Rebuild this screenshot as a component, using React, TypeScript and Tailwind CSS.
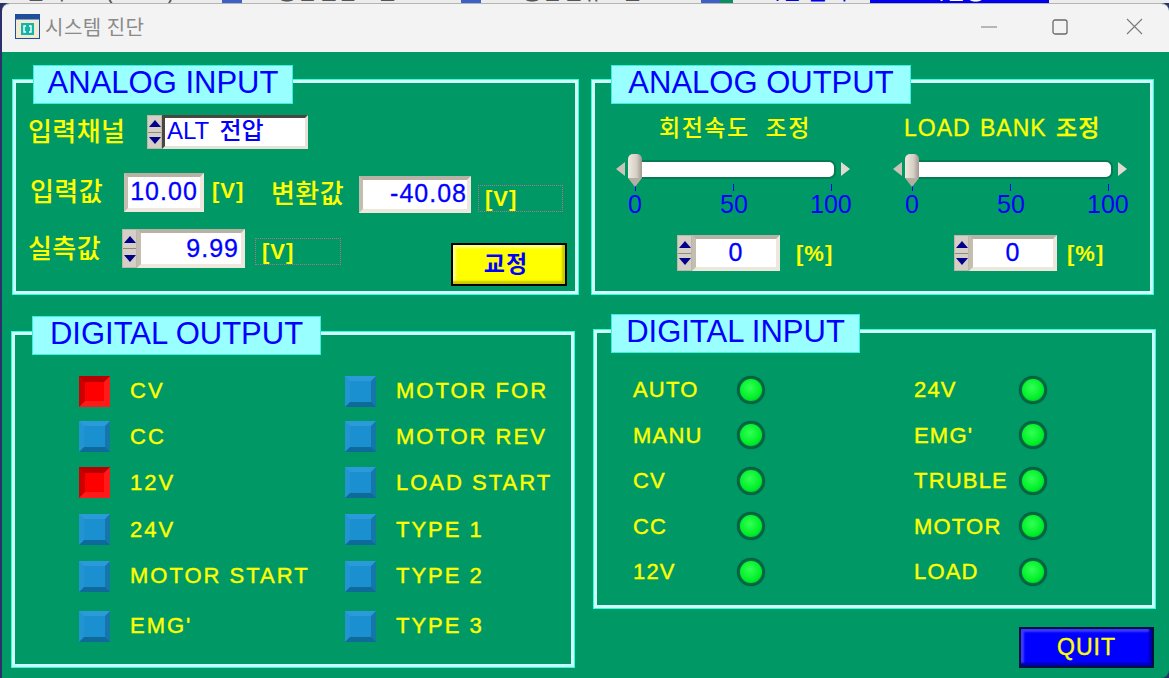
import React from 'react';

const ledClass =
  'w-[28px] h-[28px] rounded-full bg-[#0a7a50] shadow-[inset_0_0_3px_2px_#045c3a,0_0_2px_#067a52] flex items-center justify-center';

const korLabel = 'text-[#ffff00] text-[26px] leading-none font-medium tracking-[0.4px]';
const engBase = 'text-[#ffff00] text-[22px] [-webkit-text-stroke:0.4px_#ffff00]';

// little LabVIEW style up/down stepper
const Spinner = () => (
  <div className="w-[15px] h-full bg-[#d6cfc6] flex flex-col shrink-0 border border-[#bdb6ab]">
    <div className="flex-1 flex items-center justify-center border-b border-[#8f897f]">
      <div className="w-0 h-0 border-x-[6px] border-x-transparent border-b-[7px] border-b-[#00008c]" />
    </div>
    <div className="flex-1 flex items-center justify-center">
      <div className="w-0 h-0 border-x-[6px] border-x-transparent border-t-[7px] border-t-[#00008c]" />
    </div>
  </div>
);

interface ValueBoxProps {
  value: string;
  className: string;
  align?: string;
}

const ValueBox: React.FC<ValueBoxProps> = ({ value, className, align = 'justify-end' }) => (
  <div
    className={`flex items-center bg-white border-[4px] border-t-[#b8b1a6] border-l-[#c4bdb2] border-r-[#eee7de] border-b-[#eee7de] text-[#0000ff] text-[25px] tracking-[1px] [-webkit-text-stroke:0.3px_#0000ff] ${align} ${className}`}
  >
    {value}
  </div>
);

const Panel: React.FC<{ title: string; titleClass: string; className: string; children: React.ReactNode }> = ({
  title,
  titleClass,
  className,
  children,
}) => (
  <div className={`relative border-[3px] border-[#ccfffa] shadow-[0_0_0_1px_#33ffe0] ${className}`}>
    <div
      className={`absolute top-[-18px] h-[39px] pb-[4px] bg-[#99ffff] border border-[#3cf0e0] flex items-center justify-center text-[#0000ff] text-[31px] leading-none ${titleClass}`}
    >
      {title}
    </div>
    {children}
  </div>
);

const Unit: React.FC<{ text: string; className?: string }> = ({ text, className = '' }) => (
  <span className={`text-[#ffff00] text-[22px] font-bold tracking-[1px] ${className}`}>{text}</span>
);

const DottedUnit: React.FC<{ className: string }> = ({ className }) => (
  <div className={`flex items-center pl-[6px] border border-dotted border-[#b8708c] ${className}`}>
    <Unit text="[V]" />
  </div>
);

const Slider = () => (
  <div className="w-[236px] flex flex-col mt-[10px]">
    <div className="flex items-center h-[30px] w-[234px]">
      <div className="w-0 h-0 border-y-[7px] border-y-transparent border-r-[9px] border-r-[#c9c3b8]" />
      <div className="relative ml-[3px] flex-1 h-[19px] bg-white rounded-r-[7px] border-[2px] border-[#067a52]">
        <div className="absolute left-[-2px] top-[-8px] w-[14px] h-[24px] bg-[linear-gradient(90deg,#efe9e0,#d6cfc6_60%,#9f988d)] rounded-t-[5px]" />
        <div className="absolute left-[-2px] top-[16px] w-0 h-0 border-x-[7px] border-x-transparent border-t-[9px] border-t-[#b5aea3]" />
      </div>
      <div className="ml-[5px] w-0 h-0 border-y-[7px] border-y-transparent border-l-[9px] border-l-[#e0dad0]" />
    </div>
    <div className="flex pl-[19px] w-[216px] justify-between">
      <div className="w-px h-[7px] bg-[#0000ff]" />
      <div className="w-px h-[7px] bg-[#0000ff]" />
      <div className="w-px h-[7px] bg-[#0000ff]" />
    </div>
    <div className="flex w-[240px] text-[#0000ff] text-[25px] leading-[28px] pl-[12px] -mt-px">
      <span className="w-[92px]">0</span>
      <span className="w-[90px]">50</span>
      <span>100</span>
    </div>
  </div>
);

const PercentInput = () => (
  <div className="flex items-center h-[36px]">
    <Spinner />
    <ValueBox value="0" className="w-[88px] h-full" align="justify-center" />
  </div>
);

const PushButton: React.FC<{ on?: boolean }> = ({ on }) => (
  <div
    className={
      on
        ? 'w-[31px] h-[31px] bg-[#ff0000] border-[6px] border-t-[#b80000] border-l-[#cc0000] border-r-[#ff1a1a] border-b-[#ff1a1a] shrink-0'
        : 'w-[31px] h-[31px] bg-[#1a90d0] border-[5px] border-t-[#2a9ad8] border-l-[#2394d2] border-r-[#1576aa] border-b-[#0f6a9c] shrink-0'
    }
  />
);

const digitalOutputs = [
  { left: 'CV', leftOn: true, right: 'MOTOR FOR', rowClass: 'h-[46px]' },
  { left: 'CC', right: 'MOTOR REV', rowClass: 'h-[45px]' },
  { left: '12V', leftOn: true, right: 'LOAD START', rowClass: 'h-[47px]' },
  { left: '24V', right: 'TYPE 1', rowClass: 'h-[47px]' },
  { left: 'MOTOR START', right: 'TYPE 2', rowClass: 'h-[46px]' },
  { left: "EMG'", right: 'TYPE 3', rowClass: 'h-[50px] pt-[4px]' },
];

const digitalInputs = [
  ['AUTO', '24V'],
  ['MANU', "EMG'"],
  ['CV', 'TRUBLE'],
  ['CC', 'MOTOR'],
  ['12V', 'LOAD'],
];

const Led = () => (
  <div className={ledClass}>
    <div className="w-[22px] h-[22px] rounded-full bg-[radial-gradient(circle_at_45%_40%,#33ff55,#00f028_60%,#00b030)]" />
  </div>
);

// text of the window behind, only the bottom of the letters shows
const BehindText: React.FC<{ text: string; className: string }> = ({ text, className }) => (
  <div className={`h-[3px] overflow-hidden shrink-0 ${className}`}>
    <div className="-mt-[19px] text-[22px] leading-[22px] whitespace-nowrap">{text}</div>
  </div>
);

export default function App() {
  return (
    <div className="w-[1169px] h-[678px] overflow-hidden bg-[#e8e8e8] flex flex-col font-['Liberation_Sans','Noto_Sans_CJK_KR',sans-serif]">
      {/* bit of the app sitting behind the dialog */}
      <div className="h-[3px] shrink-0 flex items-start overflow-hidden bg-[#ececec] text-[#555555]">
        <BehindText text="입력프로(BEMI)" className="ml-[25px] w-[197px]" />
        <div className="w-[20px] h-full bg-[#3a62c8]" />
        <BehindText text="통합전압 1번" className="ml-[35px] w-[184px]" />
        <div className="w-[20px] h-full bg-[#3a62c8]" />
        <BehindText text="통합전류 1번" className="ml-[41px] w-[179px]" />
        <div className="w-[19px] h-full bg-[#3a62c8]" />
        <div className="w-[13px] h-full bg-[#0a9060]" />
        <BehindText text="시험 출력" className="ml-[28px] w-[109px] text-[#0000ee]" />
        <div className="w-[179px] h-full bg-[#0000ee] text-white">
          <BehindText text="시험중" className="ml-[55px] w-[100px]" />
        </div>
      </div>

      <div className="flex-1 flex min-h-0 bg-[#2b2f6a]">
        <div className="ml-[2px] flex-1 flex flex-col rounded-t-[8px] rounded-br-[8px] overflow-hidden bg-[#009966] border-t border-[#b4b4b4]">
          <div className="h-[48px] shrink-0 bg-[#f3f3f3] flex items-center pl-[13px] pb-[3px]">
            <svg width="25" height="25" viewBox="0 0 25 25">
              <rect x="0.5" y="0.5" width="24" height="24" fill="#f3ead2" stroke="#1f4f9c" />
              <rect x="0.5" y="0.5" width="24" height="5" fill="#1f4f9c" />
              <rect x="6" y="9" width="13" height="12" fill="#12b5a8" />
              <path d="M11 12h-2v6h2M14 12h2v6h-2" fill="none" stroke="#fff" strokeWidth="1.4" />
            </svg>
            <span className="ml-[5px] text-[20px] text-[#8a8a8a] font-['Noto_Sans_CJK_KR',sans-serif] tracking-[0.5px]">
              시스템 진단
            </span>
            <div className="ml-auto flex items-center pr-[26px]">
              <svg width="16" height="16" viewBox="0 0 16 16" stroke="#7a7a7a" fill="none">
                <path d="M0 8h16" />
              </svg>
              <svg className="ml-[55px]" width="16" height="16" viewBox="0 0 16 16" stroke="#6a6a6a" fill="none" strokeWidth="1.3">
                <rect x="1" y="1" width="14" height="14" rx="2" />
              </svg>
              <svg className="ml-[58px]" width="17" height="17" viewBox="0 0 17 17" stroke="#7a7a7a" fill="none" strokeWidth="1.1">
                <path d="M1 1l15 15M16 1L1 16" />
              </svg>
            </div>
          </div>

          <div className="flex-1 flex min-h-0">
            {/* left column */}
            <div className="w-[590px] shrink-0 flex flex-col pl-[11px] pt-[28px]">
              <Panel title="ANALOG INPUT" titleClass="left-[17px] w-[260px]" className="w-[565px] h-[214px] pl-[12px]">
                <div className="flex items-center h-[34px] mt-[32px]">
                  <span className={`w-[119px] ${korLabel}`}>입력채널</span>
                  <Spinner />
                  <div className="w-[146px] h-full bg-white border-[3px] border-t-[#4a4640] border-l-[#4a4640] border-r-[#e8e1d8] border-b-[#e8e1d8] flex items-center pl-[2px] pb-[3px] text-[#0000ff] text-[24px] font-medium [word-spacing:4px]">
                    ALT 전압
                  </div>
                </div>
                <div className="flex items-center mt-[23px] h-[40px]">
                  <span className={`w-[96px] pl-[2px] ${korLabel}`}>입력값</span>
                  <ValueBox value="10.00" className="w-[80px] h-[39px]" align="justify-center" />
                  <Unit text="[V]" className="ml-[8px] -mt-[4px] w-[33px]" />
                  <span className={`ml-[26px] w-[88px] mt-[4px] ${korLabel}`}>변환값</span>
                  <ValueBox value="-40.08" className="w-[112px] h-[37px] mt-[4px]" />
                  <DottedUnit className="ml-[7px] w-[85px] h-[27px] mt-[13px]" />
                </div>
                <div className="flex mt-[17px]">
                  <span className={`w-[94px] mt-[7px] ${korLabel}`}>실측값</span>
                  <div className="flex h-[39px]">
                    <Spinner />
                    <ValueBox value="9.99" className="w-[108px] h-full pr-[2px]" />
                  </div>
                  <DottedUnit className="ml-[10px] w-[86px] h-[27px] mt-[9px]" />
                  <div className="ml-[110px] mt-[14px] w-[116px] h-[43px] pr-[6px] bg-[#ffff00] border-2 border-black shadow-[inset_-3px_-3px_2px_#c8c800,inset_3px_3px_2px_#ffff80] flex items-center justify-center text-[#0000ff] text-[23px] font-bold tracking-[1px]">
                    교정
                  </div>
                </div>
              </Panel>

              <Panel title="DIGITAL OUTPUT" titleClass="left-[17px] w-[289px] top-[-19px]" className="w-[562px] h-[335px] mt-[38px] pl-[64px] pt-[33px] -ml-[1px]">
                <div className="flex flex-col">
                  {digitalOutputs.map((row) => (
                    <div key={row.left} className={`flex items-center ${row.rowClass}`}>
                      <div className="w-[266px] flex items-center gap-[20px]">
                        <PushButton on={row.leftOn} />
                        <span className={`${engBase} tracking-[2px] -mt-px`}>{row.left}</span>
                      </div>
                      <div className="flex items-center gap-[20px]">
                        <PushButton />
                        <span className={`${engBase} tracking-[2px] -mt-px`}>{row.right}</span>
                      </div>
                    </div>
                  ))}
                </div>
              </Panel>
            </div>

            {/* right column */}
            <div className="flex-1 flex flex-col pt-[28px]">
              <Panel title="ANALOG OUTPUT" titleClass="left-[16px] w-[300px]" className="w-[561px] h-[214px] pl-[21px]">
                <div className="grid grid-cols-[277px_277px] mt-[28px]">
                  <div className="flex flex-col">
                    <div className="pl-[43px] h-[33px] text-[#ffff00] text-[23px] font-medium tracking-[1.5px] [word-spacing:8px]">회전속도 조정</div>
                    <Slider />
                    <div className="flex items-center mt-[17px] ml-[61px]">
                      <PercentInput />
                      <Unit text="[%]" className="ml-[16px]" />
                    </div>
                  </div>
                  <div className="flex flex-col">
                    <div className="pl-[11px] h-[33px] text-[#ffff00] text-[23px] font-medium tracking-[1px] [-webkit-text-stroke:0.3px_#ffff00] [word-spacing:2px] whitespace-nowrap">LOAD BANK 조정</div>
                    <Slider />
                    <div className="flex items-center mt-[17px] ml-[61px]">
                      <PercentInput />
                      <Unit text="[%]" className="ml-[10px]" />
                    </div>
                  </div>
                </div>
              </Panel>

              <Panel title="DIGITAL INPUT" titleClass="left-[14px] w-[249px] top-[-19px]" className="w-[561px] h-[278px] mt-[36px] ml-[2px] pl-[36px] pt-[34px]">
                <div className="flex flex-col">
                  {digitalInputs.map(([a, b]) => (
                    <div key={a} className="flex items-center h-[45.5px]">
                      <div className="w-[281px] flex items-center">
                        <span className={`w-[104px] ${engBase} tracking-[1.2px]`}>{a}</span>
                        <Led />
                      </div>
                      <div className="flex items-center">
                        <span className={`w-[105px] ${engBase} tracking-[1.2px]`}>{b}</span>
                        <Led />
                      </div>
                    </div>
                  ))}
                </div>
              </Panel>

              <div className="flex justify-end mt-[19px] pr-[15px]">
                <div className="w-[135px] h-[41px] bg-[#0000ff] border-2 border-[#001040] shadow-[inset_-3px_-3px_2px_#0000b0,inset_3px_3px_2px_#3a3aff] flex items-center justify-center text-[#ffff00] text-[23px] tracking-[1px] [-webkit-text-stroke:0.4px_#ffff00]">
                  QUIT
                </div>
              </div>
            </div>
          </div>
        </div>
      </div>
    </div>
  );
}
